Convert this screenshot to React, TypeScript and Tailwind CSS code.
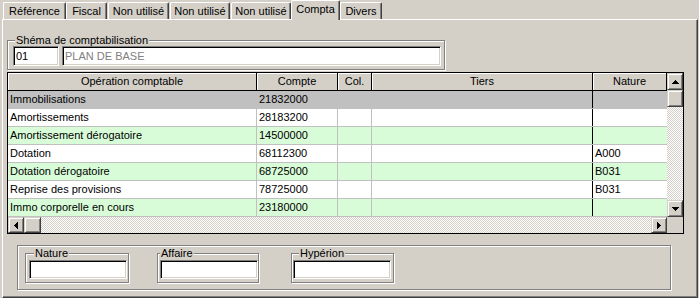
import React from 'react';

const tabs = [
  { label: 'Référence', cls: 'ml-[3px] w-[63px]' },
  { label: 'Fiscal', cls: 'w-[41px]' },
  { label: 'Non utilisé', cls: 'ml-[1px] w-[61px]' },
  { label: 'Non utilisé', cls: 'ml-[1px] w-[60px]' },
  { label: 'Non utilisé', cls: 'ml-[1px] w-[60px]' },
  { label: 'Compta', cls: 'w-[49px]', active: true },
  { label: 'Divers', cls: 'w-[42px]' },
];

const rows = [
  { op: 'Immobilisations', compte: '21832000', nature: '', bg: 'bg-[#c0c0c0]' },
  { op: 'Amortissements', compte: '28183200', nature: '', bg: 'bg-white' },
  { op: 'Amortissement dérogatoire', compte: '14500000', nature: '', bg: 'bg-[#d8fcd8]' },
  { op: 'Dotation', compte: '68112300', nature: 'A000', bg: 'bg-white' },
  { op: 'Dotation dérogatoire', compte: '68725000', nature: 'B031', bg: 'bg-[#d8fcd8]' },
  { op: 'Reprise des provisions', compte: '78725000', nature: 'B031', bg: 'bg-white' },
  { op: 'Immo corporelle en cours', compte: '23180000', nature: '', bg: 'bg-[#d8fcd8]' },
];

const sunken =
  'bg-white border border-t-[#808080] border-l-[#808080] border-b-white border-r-white shadow-[inset_1px_1px_0_#000,inset_-1px_-1px_0_#d4d0c8]';
const raised =
  'bg-[#d4d0c8] border border-t-[#d4d0c8] border-l-[#d4d0c8] border-r-[#404040] border-b-[#404040] shadow-[inset_1px_1px_0_#fff,inset_-1px_-1px_0_#808080]';
const etched = 'border border-[#808080] shadow-[1px_1px_0_#fff,inset_1px_1px_0_#fff]';
const dither = 'bg-[repeating-conic-gradient(#fff_0_25%,#d4d0c8_0_50%)] bg-[length:2px_2px]';

const Arrow = ({ dir }: { dir: 'up' | 'down' | 'left' | 'right' }) => {
  const paths = {
    up: 'M3 0h1v1h1v1h1v1h1v1H0V3h1V2h1V1h1z',
    down: 'M0 0h7v1h-1v1h-1v1h-1v1h-1v-1h-1v-1h-1v-1h-1z',
    left: 'M3 0h1v7h-1v-1h-1v-1h-1v-1h-1v-1h1v-1h1v-1h1z',
    right: 'M0 0h1v1h1v1h1v1h1v1h-1v1h-1v1h-1v1h-1z',
  };
  const vertical = dir === 'up' || dir === 'down';
  return (
    <svg width={vertical ? 7 : 4} height={vertical ? 4 : 7} shapeRendering="crispEdges">
      <path d={paths[dir]} fill="#000" />
    </svg>
  );
};

const SmallGroup = ({ label, cls, legendCls, padCls }: { label: string; cls: string; legendCls: string; padCls: string }) => (
  <fieldset className={`${cls} ${etched}`}>
    <legend className={`${legendCls} px-[1px] leading-[12px] bg-[#d4d0c8]`}>{label}</legend>
    <div className={`${padCls} mt-[1px] pb-[3px]`}>
      <div className={`w-[98px] h-[19px] ${sunken}`} />
    </div>
  </fieldset>
);

const cols = ['w-[249px]', 'w-[81px]', 'w-[34px]', 'w-[221px]', 'w-[74px]'];
const headers = ['Opération comptable', 'Compte', 'Col.', 'Tiers', 'Nature'];

export default function App() {
  return (
    <div className="w-[699px] h-[298px] overflow-hidden bg-[#d4d0c8] text-[11px] text-black font-['Liberation_Sans',Arial,sans-serif]">
      {/* onglets */}
      <div className="flex items-end h-[19px]">
        {tabs.map((t, i) =>
          t.active ? (
            <div
              key={i}
              className={`${t.cls} relative z-10 -mb-px h-[20px] pb-[3px] flex items-center justify-center bg-[#d4d0c8] border-t border-l border-r border-white border-r-[#404040] shadow-[inset_-1px_0_0_#808080] rounded-t-[2px]`}
            >
              {t.label}
            </div>
          ) : (
            <div
              key={i}
              className={`${t.cls} h-[17px] pt-[1px] flex items-center justify-center border-t border-l border-r border-white border-r-[#404040] shadow-[inset_-1px_0_0_#808080] rounded-t-[2px]`}
            >
              {t.label}
            </div>
          )
        )}
      </div>

      {/* panneau */}
      <div className="ml-[2px] w-[696px] h-[279px] flex flex-col items-start pl-[4px] border-t border-l border-r border-b border-white border-r-[#404040] border-b-[#404040] shadow-[inset_-1px_-1px_0_#808080]">
        <fieldset className={`mt-[14px] w-[438px] ${etched}`}>
          <legend className="ml-[7px] px-[1px] leading-[12px] bg-[#d4d0c8]">Shéma de comptabilisation</legend>
          <div className="flex gap-[3px] pl-[5px] pb-[3px]">
            <div className={`w-[46px] h-[20px] flex items-center pl-[2px] ${sunken}`}>01</div>
            <div className={`w-[379px] h-[20px] flex items-center pl-[2px] text-[#808080] ${sunken}`}>PLAN DE BASE</div>
          </div>
        </fieldset>

        {/* grille */}
        <div className="mt-[2px] w-[677px] h-[162px] flex border border-black bg-white">
          <div className="w-[659px] flex flex-col">
            <div className="flex h-[18px] border-b border-black">
              {headers.map((h, i) => (
                <div
                  key={h}
                  className={`${cols[i]} h-full flex items-center justify-center bg-[#d4d0c8] border-r border-black shadow-[inset_1px_1px_0_#fff]`}
                >
                  {h}
                </div>
              ))}
            </div>
            {rows.map((r) => (
              <div key={r.op} className={`flex h-[18px] border-b border-[#c0c0c0] ${r.bg}`}>
                <div className={`${cols[0]} flex items-center pl-[2px] border-r border-[#c0c0c0]`}>{r.op}</div>
                <div className={`${cols[1]} flex items-center pl-[2px] border-r border-[#c0c0c0]`}>{r.compte}</div>
                <div className={`${cols[2]} border-r border-[#c0c0c0]`} />
                <div className={`${cols[3]} border-r border-black`} />
                <div className={`${cols[4]} flex items-center pl-[2px]`}>{r.nature}</div>
              </div>
            ))}
            <div className="flex h-[16px]">
              <div className={`w-[16px] ${raised} flex items-center justify-center`}>
                <Arrow dir="left" />
              </div>
              <div className={`w-[17px] ${raised}`} />
              <div className={`flex-1 ${dither}`} />
              <div className={`w-[16px] ${raised} flex items-center justify-center`}>
                <Arrow dir="right" />
              </div>
            </div>
          </div>
          <div className="w-[16px] flex flex-col">
            <div className={`h-[17px] ${raised} flex items-center justify-center`}>
              <Arrow dir="up" />
            </div>
            <div className={`h-[17px] ${raised}`} />
            <div className={`flex-1 ${dither}`} />
            <div className={`h-[17px] ${raised} flex items-center justify-center`}>
              <Arrow dir="down" />
            </div>
            <div className="h-[16px] bg-[#d4d0c8]" />
          </div>
        </div>

        {/* zones du bas */}
        <div className={`mt-[11px] ml-[10px] w-[654px] h-[45px] flex items-start pt-[1px] pl-[7px] ${etched}`}>
          <SmallGroup label="Nature" cls="w-[104px]" legendCls="ml-[8px]" padCls="pl-[3px]" />
          <SmallGroup label="Affaire" cls="ml-[28px] w-[102px]" legendCls="ml-[2px]" padCls="pl-[2px]" />
          <SmallGroup label="Hypérion" cls="ml-[32px] w-[103px]" legendCls="ml-[7px]" padCls="pl-[1px]" />
        </div>
      </div>
    </div>
  );
}
